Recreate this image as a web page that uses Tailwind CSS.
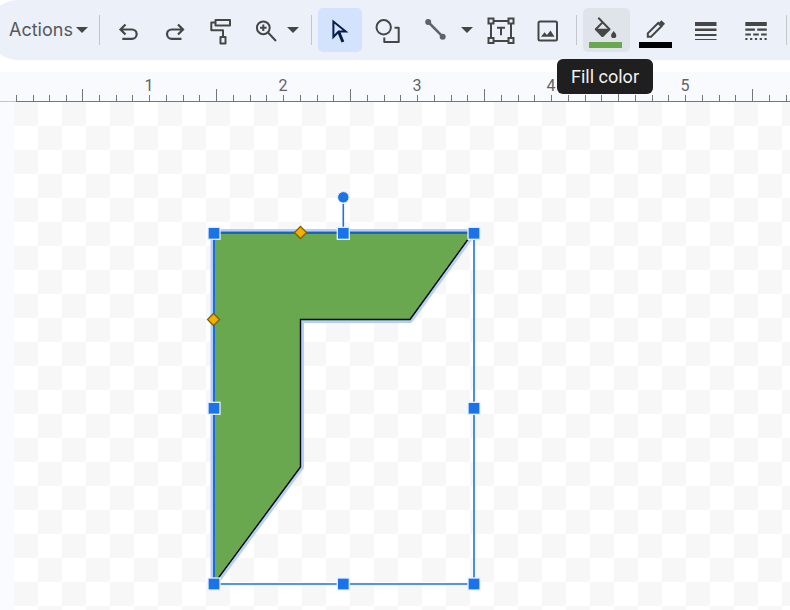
<!DOCTYPE html>
<html lang="en">
<head>
<meta charset="utf-8">
<title>Drawing</title>
<script src="https://cdn.jsdelivr.net/npm/@tailwindcss/browser@4"></script>
</head>
<body class="flex min-h-screen flex-col overflow-x-hidden bg-white font-['Roboto','Liberation_Sans',sans-serif]">
<header role="toolbar" aria-label="Drawing tools" class="-ml-3 flex h-[60px] shrink-0 items-center rounded-l-full bg-[#ecf0f9] pl-[21px] text-[#444746]">
  <button class="flex h-11 w-[84px] shrink-0 items-center gap-[3px] font-['Inter','Roboto',sans-serif] text-lg text-[#55585a]">Actions
    <svg class="h-[6px] w-3 shrink-0" viewBox="0 0 12 6" fill="#444746"><path d="M0 0h12L6 6z"/></svg>
  </button>
  <span class="ml-[6px] h-[30px] w-px shrink-0 bg-[#c4c7ca]"></span>
  <button aria-label="Undo" class="ml-[6px] size-11 shrink-0"><svg viewBox="106 8 44 44" fill="none" stroke="currentColor" stroke-width="2.200"><path d="M125.500 24.500l-5 5 5 5M120.500 29.500h11.500a4.600 4.600 0 0 1 0 9.300H122.300"/></svg></button>
  <button aria-label="Redo" class="ml-[3px] size-11 shrink-0"><svg viewBox="153 8 44 44" fill="none" stroke="currentColor" stroke-width="2.200"><path d="M178 24.500l5 5-5 5M183 29.500h-11.300a4.600 4.600 0 0 0 0 9.300H181.500"/></svg></button>
  <button aria-label="Paint format" class="ml-px size-11 shrink-0"><svg viewBox="198 8 44 44" fill="none" stroke="currentColor" stroke-width="2" stroke-linejoin="round"><rect x="215.500" y="20" width="14.500" height="5.500"/><path d="M215.500 22.500H211.300V30.300H223V37"/><rect x="220.500" y="37" width="5" height="6.500"/></svg></button>
  <button aria-label="Zoom" class="ml-px size-11 shrink-0"><svg viewBox="243 8 44 44" fill="none" stroke="currentColor" stroke-width="2"><circle cx="263.300" cy="27.800" r="6.400"/><path d="M268 32.500l8 8.500M263.300 24.500v6.600M260 27.800h6.600"/></svg></button>
  <button aria-label="Zoom options" class="flex h-11 w-3 shrink-0 items-center"><svg class="h-[6px] w-3" viewBox="0 0 12 6" fill="currentColor"><path d="M0 0h12L6 6z"/></svg></button>
  <span class="ml-3 h-[30px] w-px shrink-0 bg-[#c4c7ca]"></span>
  <button aria-label="Select" aria-pressed="true" class="ml-[6px] size-11 shrink-0 rounded-[5px] bg-[#d3e3fd] text-[#041e49]"><svg viewBox="318 8 44 44" fill="none" stroke="currentColor" stroke-width="2"><path d="M333.400 21.500V37L338.600 31.600H345.700z"/><path d="M338.800 32l4.100 10" stroke-width="3"/></svg></button>
  <button aria-label="Shape" class="ml-1 size-11 shrink-0"><svg viewBox="366 8 44 44" fill="none" stroke="currentColor" stroke-width="2"><circle cx="383.700" cy="27.300" r="7.200"/><path d="M384.300 37.500V42H398.700V27.800H394.500" stroke-linejoin="round"/></svg></button>
  <button aria-label="Line" class="ml-[3px] size-11 shrink-0 text-[#5f6368]"><svg viewBox="413 8 44 44" fill="currentColor"><circle cx="428.200" cy="22" r="3"/><circle cx="442.700" cy="36.700" r="3"/><path d="M428.200 22L442.700 36.700" stroke="currentColor" stroke-width="2.500"/></svg></button>
  <button aria-label="Line options" class="ml-1 flex h-11 w-3 shrink-0 items-center"><svg class="h-[6px] w-3" viewBox="0 0 12 6" fill="currentColor"><path d="M0 0h12L6 6z"/></svg></button>
  <button aria-label="Text box" class="ml-[6px] size-11 shrink-0"><svg viewBox="479 8 44 44" fill="none" stroke="currentColor" stroke-width="2"><path d="M488.500 18.500h5v5h-5zM508.500 18.500h5v5h-5zM488.500 38h5v5h-5zM508.500 38h5v5h-5zM494 21h14M494 41h14M491 24v14M511 24v14M497 27.700h8M501 27.700v7.500"/></svg></button>
  <button aria-label="Image" class="ml-[2px] size-11 shrink-0"><svg viewBox="525 8 44 44" fill="none" stroke="currentColor" stroke-width="2"><rect x="538.500" y="21.500" width="18.500" height="19" rx="1.500"/><path d="M541 36.700l3.500-4.500 2.500 2.800 3.500-4.500 4 6.200z" fill="currentColor" stroke="none"/></svg></button>
  <span class="ml-[7px] h-[30px] w-px shrink-0 bg-[#c4c7ca]"></span>
  <div class="relative ml-[6px] shrink-0">
    <button aria-label="Fill color" aria-describedby="tip" class="block h-11 w-[47px] rounded-[5px] bg-[#dfe3ea]"><svg viewBox="583 8 47 44" fill="currentColor"><path d="M598.300 17.800L609.500 29.200 602.500 36 595.800 29.200 602.300 22.600" fill="none" stroke="currentColor" stroke-width="2" stroke-linejoin="round"/><path d="M595 28.800H610.300L603.500 36.500Q602.500 37.300 601.500 36.500z"/><path d="M613.700 31q2.600 3 2.600 4.500a2.600 2.600 0 0 1-5.200 0q0-1.500 2.600-4.500z"/><path d="M589 42h33v6h-33z" fill="#6aa84f"/></svg></button>
    <div id="tip" role="tooltip" class="absolute top-[51px] -left-[26px] z-10 flex h-[35px] w-24 items-center justify-center rounded-md bg-[#1f1f1f] text-lg whitespace-nowrap text-[#f2f2f2]">Fill color</div>
  </div>
  <button aria-label="Border color" class="ml-[2px] h-11 w-[47px] shrink-0"><svg viewBox="632 8 47 44" fill="none" stroke="currentColor" stroke-width="2"><path d="M647.800 36.800V33.400L658.200 23 661.500 26.300 651.100 36.800z"/><path d="M660.200 21.500l3.600 3.600" stroke-width="3.500"/><path d="M639 42h33v6h-33z" fill="#000" stroke="none"/></svg></button>
  <button aria-label="Border weight" class="ml-[3px] h-11 w-[47px] shrink-0"><svg viewBox="682 8 47 44" fill="currentColor"><path d="M695 22h21.500v4H695zM695 28.500h21.500v2.500H695zM695 34h21.500v2H695zM695 39h21.500v1H695z"/></svg></button>
  <button aria-label="Border dash" class="ml-[3px] h-11 w-[47px] shrink-0"><svg viewBox="732 8 47 44" fill="none" stroke="currentColor"><path d="M745.300 24h21.500" stroke-width="4"/><path d="M745.300 29.700h21.500" stroke-width="2.300" stroke-dasharray="9.600 2.300"/><path d="M745.300 34.500h21.500" stroke-width="2" stroke-dasharray="5.600 2.300"/><path d="M745.300 39h21.500" stroke-width="2" stroke-dasharray="2.200 2.600"/></svg></button>
  <span class="ml-[7px] h-[30px] w-px shrink-0 bg-[#c4c7ca]"></span>
</header>
<div id="ruler" aria-label="Horizontal ruler" class="mt-3 flex h-[30px] shrink-0 overflow-hidden bg-[#f9fafd] text-base text-[#5f6368]">
  <div class="w-4 shrink-0 border-b border-[#c4c7ca]"></div>
  <div class="flex w-[66px] shrink-0 items-end border-b border-[#74777a]">
    <span class="h-[6px] flex-1 border-l border-[#74777a]"></span><span class="h-[6px] flex-1 border-l border-[#74777a]"></span><span class="h-[6px] flex-1 border-l border-[#74777a]"></span><span class="h-[6px] flex-1 border-l border-[#74777a]"></span>
  </div>
</div>
<main class="flex grow">
  <div class="w-[14px] shrink-0 bg-[#f9fbff]"></div>
  <div class="relative min-h-[508px] grow">
    <svg class="absolute inset-0 h-full w-full" role="img" aria-label="Drawing canvas with a selected green half frame">
      <defs>
        <pattern id="checks" width="48" height="48" patternUnits="userSpaceOnUse"><path d="M0 0h48v48H0z" fill="#fff"/><path d="M0 0h24v24H0zM24 24h24v24H24z" fill="#f7f7f7"/></pattern>
        <rect id="handle" x="-6" y="-6" width="12" height="12" fill="#1a73e8" stroke="#e8f0fe" stroke-width="1.300"/>
        <path id="knob" d="M0-6L6 0 0 6-6 0z" fill="#f4b000" stroke="#7f6000" stroke-width="1.300"/>
      </defs>
      <rect width="100%" height="100%" fill="url(#checks)"/>
      <g transform="translate(-14 -102)">
        <path d="M214 232.500H473L410 319.500H300.500V467L214 584z" fill="#b5cffa" stroke="#b5cffa" stroke-width="7" stroke-linejoin="round"/>
        <path d="M214 232.500H473L410 319.500H300.500V467L214 584z" fill="#6aa84f" stroke="#000" stroke-width="1.400"/>
        <path d="M474 233V584H214M343.300 204v24" fill="none" stroke="#fff" stroke-opacity=".3" stroke-width="3"/>
        <path d="M474 233V584H214M343.300 204v24" fill="none" stroke="#1a73e8" stroke-width="1.600"/>
        <path d="M214 584V233" stroke="#1a6be0" stroke-width="2"/>
        <path d="M214 232.800H474" stroke="#1b5fc0" stroke-width="1.700"/>
        <circle cx="343.300" cy="197.300" r="5.700" fill="#1a73e8" stroke="#e8f0fe"/>
        <use href="#handle" x="214" y="233.300"/><use href="#handle" x="343.300" y="233.300"/><use href="#handle" x="474" y="233.300"/>
        <use href="#handle" x="214" y="408.300"/><use href="#handle" x="474" y="408.300"/>
        <use href="#handle" x="214" y="584"/><use href="#handle" x="343.300" y="584"/><use href="#handle" x="474" y="584"/>
        <use href="#knob" x="300.500" y="232.500"/><use href="#knob" x="213.500" y="319.500"/>
      </g>
    </svg>
  </div>
</main>
<script>
  // Each unit spans half mark to half mark, with its number over the centre tick.
  const ruler = document.getElementById('ruler');
  function drawRuler() {
    while (ruler.children.length > 2) ruler.lastElementChild.remove();
    for (let n = 1, x = 82; x < window.innerWidth; n++, x += 134) {
      const unit = document.createElement('div');
      unit.className = 'flex w-[134px] shrink-0 flex-col justify-end border-b border-[#74777a]';
      let ticks = '';
      for (let i = 0; i < 8; i++) ticks += `<span class="${i ? 'h-[6px]' : 'h-3'} flex-1 border-l border-[#74777a]"></span>`;
      const label = x + 80 < window.innerWidth ? `<span class="-mb-[7px] text-center leading-5">${n}</span>` : '';
      unit.innerHTML = `${label}<div class="flex items-end">${ticks}</div>`;
      ruler.append(unit);
    }
  }
  drawRuler();
  window.addEventListener('resize', drawRuler);
</script>
</body>
</html>
